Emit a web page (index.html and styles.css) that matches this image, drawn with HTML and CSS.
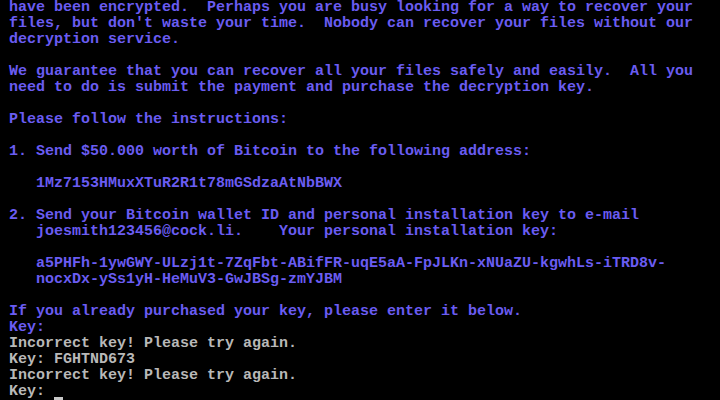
FILE: index.html
```html
<!DOCTYPE html>
<html>
<head>
    <title>Console</title>
    <link rel="stylesheet" href="styles.css">
</head>
<body>
    <div class="screen">
        <div class="line"> have been encrypted.  Perhaps you are busy looking for a way to recover your</div>
        <div class="line"> files, but don't waste your time.  Nobody can recover your files without our</div>
        <div class="line"> decryption service.</div>
        <div class="line"> </div>
        <div class="line"> We guarantee that you can recover all your files safely and easily.  All you</div>
        <div class="line"> need to do is submit the payment and purchase the decryption key.</div>
        <div class="line"> </div>
        <div class="line"> Please follow the instructions:</div>
        <div class="line"> </div>
        <div class="line"> 1. Send $50.000 worth of Bitcoin to the following address:</div>
        <div class="line"> </div>
        <div class="line">    1Mz7153HMuxXTuR2R1t78mGSdzaAtNbBWX</div>
        <div class="line"> </div>
        <div class="line"> 2. Send your Bitcoin wallet ID and personal installation key to e-mail</div>
        <div class="line">    joesmith123456@cock.li.    Your personal installation key:</div>
        <div class="line"> </div>
        <div class="line">    a5PHFh-1ywGWY-ULzj1t-7ZqFbt-ABifFR-uqE5aA-FpJLKn-xNUaZU-kgwhLs-iTRD8v-</div>
        <div class="line">    nocxDx-ySs1yH-HeMuV3-GwJBSg-zmYJBM</div>
        <div class="line"> </div>
        <div class="line"> If you already purchased your key, please enter it below.</div>
        <div class="line"> Key:</div>
        <div class="line input"> Incorrect key! Please try again.</div>
        <div class="line input"> Key: FGHTND673</div>
        <div class="line input"> Incorrect key! Please try again.</div>
        <div class="line input"> Key: <span class="cursor"> </span></div>
    </div>
</body>
</html>
```

FILE: styles.css
```css
* {
    box-sizing: border-box;
}

body {
    margin: 0;
    padding: 0;
    background-color: #000;
    font-family: "Liberation Mono", "DejaVu Sans Mono", monospace;
}

.screen {
    width: 720px;
    height: 400px;
    overflow: hidden;
    background-color: #000;
    color: #6a5cf2;
    font-size: 15px;
    font-weight: bold;
}

.line {
    height: 16px;
    line-height: 16px;
    white-space: pre;
}

.input {
    color: #b8b8b8;
}

.cursor {
    display: inline-block;
    width: 9px;
    height: 16px;
    border-bottom: 3px solid #c8c8c8;
    vertical-align: top;
}
```
